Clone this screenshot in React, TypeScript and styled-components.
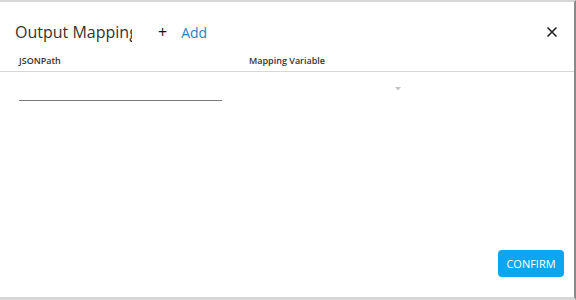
import React from 'react'
import styled, { createGlobalStyle } from 'styled-components'

const COLORS = {
  border: '#d6d6d6',
  edge: '#8a8a8a',
  text: '#333333',
  link: '#2a7fc0',
  confirm: '#0aa6f0',
  line: '#7a7a7a',
};

const Global = createGlobalStyle`
  html, body { margin: 0; padding: 0; background: #fff; }
  body { font-family: "Open Sans", "Noto Sans", sans-serif; }
`;

const Dialog = styled.div`
  width: 576px;
  height: 300px;
  box-sizing: border-box;
  border-top: 2px solid ${COLORS.border};
  border-right: 2px solid ${COLORS.edge};
  border-bottom: 3px solid ${COLORS.border};
  display: flex;
  flex-direction: column;
`;

const TitleBar = styled.div`
  display: flex;
  align-items: center;
  height: 34px;
  padding: 13px 16px 0 15px;
`;

const Title = styled.h2`
  margin: 0;
  width: 117px;
  overflow: hidden;
  white-space: nowrap;
  font-size: 16px;
  font-weight: 400;
  color: ${COLORS.text};
`;

const AddButton = styled.button`
  display: flex;
  align-items: center;
  gap: 14px;
  margin-left: 26px;
  padding: 0;
  border: 0;
  background: none;
  font-family: inherit;
  font-size: 14px;
  color: ${COLORS.link};
  cursor: pointer;
`;

const Plus = styled.span`
  font-size: 16px;
  color: #111;
`;

const Close = styled.button`
  margin-left: auto;
  padding: 0;
  border: 0;
  background: none;
  display: flex;
  cursor: pointer;
`;

const Columns = styled.div`
  display: grid;
  grid-template-columns: 230px 1fr;
  height: 22px;
  align-items: center;
  padding: 0 19px;
  border-bottom: 1px solid ${COLORS.border};
`;

const ColLabel = styled.span`
  font-size: 9px;
  font-weight: 600;
  color: ${COLORS.text};
`;

const Row = styled.div`
  display: grid;
  grid-template-columns: 230px 1fr;
  padding: 10px 19px 0;
  align-items: start;
`;

const PathInput = styled.input`
  width: 203px;
  height: 18px;
  padding: 0;
  border: 0;
  border-bottom: 1px solid ${COLORS.line};
  outline: none;
  font-family: inherit;
  font-size: 12px;
  background: transparent;
`;

const Select = styled.div`
  width: 152px;
  display: flex;
  justify-content: flex-end;
  padding-top: 5px;
`;

const Footer = styled.div`
  margin-top: auto;
  display: flex;
  justify-content: flex-end;
  padding: 0 10px 20px 0;
`;

const Confirm = styled.button`
  width: 66px;
  height: 27px;
  border: 0;
  border-radius: 4px;
  background: ${COLORS.confirm};
  color: #fff;
  font-family: inherit;
  font-size: 11px;
  cursor: pointer;
`;

export default function App() {
  return (
    <>
      <Global />
      <Dialog>
        <TitleBar>
          <Title>Output Mapping:</Title>
          <AddButton>
            <Plus>+</Plus>
            Add
          </AddButton>
          <Close aria-label="close">
            <svg width="12" height="12" viewBox="0 0 12 12">
              <path d="M1.5 1.5L10.5 10.5M10.5 1.5L1.5 10.5" stroke="#222" strokeWidth="1.6" />
            </svg>
          </Close>
        </TitleBar>
        <Columns>
          <ColLabel>JSONPath</ColLabel>
          <ColLabel>Mapping Variable</ColLabel>
        </Columns>
        <Row>
          <PathInput />
          <Select>
            <svg width="6" height="4" viewBox="0 0 6 4">
              <path d="M0 0H6L3 3.5Z" fill="#c4c4c4" />
            </svg>
          </Select>
        </Row>
        <Footer>
          <Confirm>CONFIRM</Confirm>
        </Footer>
      </Dialog>
    </>
  )
}
